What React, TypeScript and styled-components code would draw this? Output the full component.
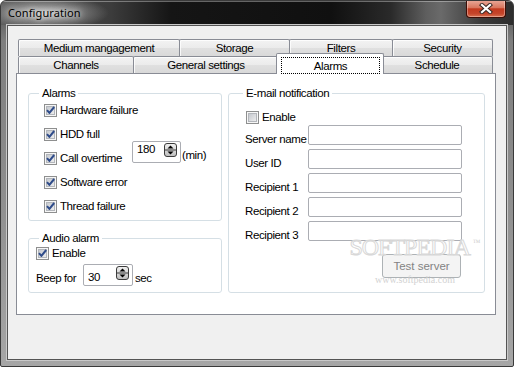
import React from "react";
import styled, { createGlobalStyle, css } from "styled-components";

const GlobalStyle = createGlobalStyle`
  html, body { margin: 0; padding: 0; background: #ffffff; }
  #root { width: 514px; height: 367px; }
  *, *::before, *::after { box-sizing: border-box; }
`;

const Window = styled.div`
  width: 514px;
  height: 367px;
  display: flex;
  flex-direction: column;
  border: 1px solid #3a3a3a;
  border-radius: 6px 6px 2px 2px;
  overflow: hidden;
  background: linear-gradient(to bottom, #4a4a4a 0px, #7e7e7e 40px, #8f8f8f 200px, #a6a6a6 100%);
  font-family: "Liberation Sans", Arial, sans-serif;
  font-size: 11.5px;
  letter-spacing: -0.4px;
  color: #000;
`;

const TitleBar = styled.div`
  flex: 0 0 24px;
  height: 24px;
  display: flex;
  align-items: flex-start;
  padding: 0 7px;
  background:
    radial-gradient(ellipse 64px 17px at 44px 12px, rgba(215, 215, 215, 0.85) 0%, rgba(165, 165, 165, 0.5) 55%, rgba(120, 120, 120, 0) 100%),
    linear-gradient(to right, #5a5a5a 0px, #3c3c3c 110px, #151515 170px, #101010 330px, #2a2a2a 390px, #5e5e5e 425px, #6a6a6a 440px, #3a3a3a 480px, #2d2d2d 100%);
  box-shadow: inset 0 1px 0 rgba(255, 255, 255, 0.35);
`;

const Title = styled.div`
  padding-top: 4px;
  font-family: "Noto Sans", "Liberation Sans", sans-serif;
  font-size: 11px;
  line-height: 16px;
  letter-spacing: 0.1px;
  color: #000;
  text-shadow: 0 0 6px rgba(255, 255, 255, 0.9), 0 0 10px rgba(255, 255, 255, 0.7);
`;

const CloseButton = styled.div`
  margin-left: auto;
  margin-top: -1px;
  width: 40px;
  height: 18px;
  display: flex;
  align-items: center;
  justify-content: center;
  border: 1px solid #3d0d05;
  border-top: none;
  border-radius: 0 0 4px 4px;
  background: linear-gradient(to bottom, #e9ab9c 0%, #d8775f 45%, #c23a1f 52%, #c4452b 80%, #d8704f 100%);
  box-shadow: inset 0 0 0 1px rgba(255, 255, 255, 0.35);
`;

const Frame = styled.div`
  flex: 1;
  display: flex;
  padding: 0 6px 6px 6px;
`;

const Client = styled.div`
  flex: 1;
  background: #f0f0f0;
  border: 1px solid #545454;
  box-shadow: 0 0 0 1px #c9c9c9;
  padding: 13px 0 0 8px;
`;

const TabControl = styled.div`
  width: 480px;
  display: flex;
  flex-direction: column;
`;

const TabRow = styled.div`
  display: flex;
  height: 17px;
  padding-left: 2px;
`;

const Tab = styled.div<{ $w: number; $active?: boolean }>`
  flex: 0 0 ${(p) => p.$w}px;
  height: 17px;
  margin-left: -1px;
  display: flex;
  align-items: center;
  justify-content: center;
  line-height: 14px;
  white-space: nowrap;
  border: 1px solid #898c95;
  border-bottom: none;
  border-radius: 2px 2px 0 0;
  background: linear-gradient(to bottom, #f3f3f3 0%, #ebebeb 50%, #e0e0e0 51%, #d9d9d9 100%);
  box-shadow: inset 1px 1px 0 rgba(255, 255, 255, 0.8);
  &:first-child {
    margin-left: 0;
  }
  ${(p) =>
    p.$active &&
    css`
      flex-basis: ${p.$w + 4}px;
      height: 21px;
      margin: -3px -2px 0 -3px;
      position: relative;
      z-index: 1;
      align-items: stretch;
      background: #ffffff;
      box-shadow: none;
    `}
`;

const FocusRing = styled.div`
  flex: 1;
  margin: 3px 3px 0 4px;
  border: 1px dotted #000;
  display: flex;
  align-items: center;
  justify-content: center;
`;

const Panel = styled.div`
  position: relative;
  width: 480px;
  height: 242px;
  border: 1px solid #898c95;
  background: #ffffff;
  padding: 19px 0 0 11px;
  display: grid;
  grid-template-columns: 194px 257px;
  column-gap: 6px;
  align-items: start;
`;

const Column = styled.div`
  display: flex;
  flex-direction: column;
  gap: 17px;
`;

const GroupBox = styled.div<{ $h: number; $pad: string }>`
  position: relative;
  height: ${(p) => p.$h}px;
  border: 1px solid #d5dfe5;
  border-radius: 3px;
  padding: ${(p) => p.$pad};
  display: flex;
  flex-direction: column;
`;

const Caption = styled.span<{ $left: number }>`
  position: absolute;
  top: -8px;
  left: ${(p) => p.$left}px;
  padding: 0 3px;
  background: #ffffff;
  line-height: 14px;
  white-space: nowrap;
`;

const Row = styled.div<{ $h: number }>`
  display: flex;
  align-items: center;
  height: ${(p) => p.$h}px;
`;

const CheckItem = styled.div<{ $w?: number }>`
  display: flex;
  align-items: center;
  flex: 0 0 ${(p) => (p.$w ? `${p.$w}px` : "auto")};
`;

const CheckSvg = styled.svg<{ $ml?: number }>`
  display: block;
  flex: 0 0 13px;
  margin: 0 3px 0 ${(p) => p.$ml ?? 0}px;
`;

const Text = styled.span<{ $w?: number; $dy?: number; $ml?: number }>`
  line-height: 14px;
  white-space: nowrap;
  ${(p) => p.$w && `flex: 0 0 ${p.$w}px;`}
  margin-top: ${(p) => p.$dy ?? 0}px;
  margin-left: ${(p) => p.$ml ?? 0}px;
`;

const Spinner = styled.div<{ $w: number; $dy: number }>`
  flex: 0 0 ${(p) => p.$w}px;
  height: 22px;
  margin-top: ${(p) => p.$dy}px;
  display: flex;
  align-items: flex-start;
  padding: 0 3px 0 4px;
  border: 1px solid #abadb3;
  border-radius: 2px;
  background: #ffffff;
`;

const SpinValue = styled.span<{ $top: number }>`
  padding-top: ${(p) => p.$top}px;
  line-height: 14px;
`;

const SpinSvg = styled.svg`
  display: block;
  margin: 1px 0 0 auto;
`;

const FormGrid = styled.div`
  display: grid;
  grid-template-columns: 63px 154px;
  grid-auto-rows: 24px;
`;

const FieldLabel = styled.span`
  padding-top: 7px;
  line-height: 14px;
  white-space: nowrap;
`;

const TextBox = styled.input`
  width: 154px;
  height: 20px;
  margin: 0;
  padding: 0 3px;
  border: 1px solid #abadb3;
  border-radius: 2px;
  background: #ffffff;
  outline: none;
  font: inherit;
`;

const ButtonRow = styled.div`
  width: 216px;
  margin-top: 9px;
  display: flex;
  justify-content: flex-end;
`;

const TestButton = styled.button`
  width: 79px;
  height: 24px;
  padding: 0;
  border: 1px solid #adb2b5;
  border-radius: 3px;
  background: #f4f4f4;
  color: #838383;
  font: inherit;
  line-height: 11px;
`;

const Watermark = styled.div`
  position: absolute;
  left: 336px;
  top: 157px;
  width: 124px;
  display: flex;
  flex-direction: column;
  align-items: center;
  pointer-events: none;
  z-index: 2;
`;

const WatermarkBrand = styled.div`
  font-family: "Liberation Serif", serif;
  font-size: 24px;
  line-height: 24px;
  letter-spacing: -1px;
  color: rgba(255, 255, 255, 0.4);
  -webkit-text-stroke: 1px #d8d8d8;
  white-space: nowrap;
  sup {
    font-size: 8px;
    letter-spacing: 0;
    -webkit-text-stroke: 0;
    color: #cfcfcf;
    vertical-align: 10px;
    margin-left: 3px;
  }
`;

const WatermarkUrl = styled.div`
  margin-top: 16px;
  font-family: "Liberation Serif", serif;
  font-size: 10px;
  line-height: 9px;
  letter-spacing: 0;
  color: #d2d2d2;
  white-space: nowrap;
`;

const Checkbox: React.FC<{ checked?: boolean; ml?: number }> = ({ checked, ml }) => (
  <CheckSvg $ml={ml} width="13" height="13" viewBox="0 0 13 13">
    <defs>
      <linearGradient id="cbg" x1="0" y1="0" x2="1" y2="1">
        <stop offset="0" stopColor="#c3c7cd" />
        <stop offset="1" stopColor="#efefef" />
      </linearGradient>
    </defs>
    <rect x="0.5" y="0.5" width="12" height="12" fill="#f6f6f6" stroke="#8e8f8f" />
    <rect x="2.5" y="2.5" width="8" height="8" fill="url(#cbg)" stroke="#b3b6bb" />
    {checked && (
      <path d="M3 6.2 L5.4 8.9 L10.2 3" fill="none" stroke="#2f4c8a" strokeWidth="2" strokeLinejoin="round" />
    )}
  </CheckSvg>
);

const SpinIcon: React.FC = () => (
  <SpinSvg width="13" height="14" viewBox="0 0 13 14">
    <defs>
      <linearGradient id="spg" x1="0" y1="0" x2="0" y2="1">
        <stop offset="0" stopColor="#f2f2f2" />
        <stop offset="1" stopColor="#bdbdbd" />
      </linearGradient>
    </defs>
    <rect x="0.5" y="0.5" width="12" height="13" rx="2.5" fill="url(#spg)" stroke="#3c3c3c" />
    <line x1="1" y1="7" x2="12" y2="7" stroke="#3c3c3c" />
    <path d="M3.5 5.5 L6.5 2.5 L9.5 5.5 Z" fill="#000" />
    <path d="M3.5 8.5 L6.5 11.5 L9.5 8.5 Z" fill="#000" />
  </SpinSvg>
);

const CloseIcon: React.FC = () => (
  <svg width="14" height="11" viewBox="0 0 14 11">
    <path d="M3 2 L11 9 M11 2 L3 9" stroke="#3b2a26" strokeWidth="4.2" strokeLinecap="square" fill="none" />
    <path d="M3 2 L11 9 M11 2 L3 9" stroke="#ffffff" strokeWidth="2.2" strokeLinecap="square" fill="none" />
  </svg>
);

const backTabs = [
  { label: "Medium mangagement", w: 162 },
  { label: "Storage", w: 111 },
  { label: "Filters", w: 104 },
  { label: "Security", w: 101 },
];

const frontTabs = [
  { label: "Channels", w: 116 },
  { label: "General settings", w: 146 },
  { label: "Alarms", w: 104, active: true },
  { label: "Schedule", w: 112 },
];

const alarmItems = ["Hardware failure", "HDD full", "Call overtime", "Software error", "Thread failure"];

const emailFields = ["Server name", "User ID", "Recipient 1", "Recipient 2", "Recipient 3"];

export default function App() {
  return (
    <>
      <GlobalStyle />
      <Window>
        <TitleBar>
          <Title>Configuration</Title>
          <CloseButton>
            <CloseIcon />
          </CloseButton>
        </TitleBar>
        <Frame>
          <Client>
            <TabControl>
              <TabRow>
                {backTabs.map((t) => (
                  <Tab key={t.label} $w={t.w}>
                    {t.label}
                  </Tab>
                ))}
              </TabRow>
              <TabRow>
                {frontTabs.map((t) => (
                  <Tab key={t.label} $w={t.w} $active={t.active}>
                    {t.active ? <FocusRing>{t.label}</FocusRing> : t.label}
                  </Tab>
                ))}
              </TabRow>
              <Panel>
                <Column>
                  <GroupBox $h={128} $pad="4px 0 0 15px">
                    <Caption $left={10}>Alarms</Caption>
                    {alarmItems.map((item) =>
                      item === "Call overtime" ? (
                        <Row key={item} $h={24}>
                          <CheckItem $w={88}>
                            <Checkbox checked />
                            <Text>{item}</Text>
                          </CheckItem>
                          <Spinner $w={49} $dy={-12}>
                            <SpinValue $top={0}>180</SpinValue>
                            <SpinIcon />
                          </Spinner>
                          <Text $dy={-6} $ml={1}>
                            (min)
                          </Text>
                        </Row>
                      ) : (
                        <Row key={item} $h={24}>
                          <CheckItem>
                            <Checkbox checked />
                            <Text>{item}</Text>
                          </CheckItem>
                        </Row>
                      )
                    )}
                  </GroupBox>
                  <GroupBox $h={55} $pad="2px 0 0 7px">
                    <Caption $left={10}>Audio alarm</Caption>
                    <Row $h={24}>
                      <CheckItem>
                        <Checkbox checked />
                        <Text>Enable</Text>
                      </CheckItem>
                    </Row>
                    <Row $h={26}>
                      <Text $w={47}>Beep for</Text>
                      <Spinner $w={50} $dy={-6}>
                        <SpinValue $top={5}>30</SpinValue>
                        <SpinIcon />
                      </Spinner>
                      <Text $ml={2}>sec</Text>
                    </Row>
                  </GroupBox>
                </Column>
                <GroupBox $h={200} $pad="15px 0 0 16px">
                  <Caption $left={14}>E-mail notification</Caption>
                  <Row $h={16}>
                    <CheckItem>
                      <Checkbox ml={1} />
                      <Text>Enable</Text>
                    </CheckItem>
                  </Row>
                  <FormGrid>
                    {emailFields.map((f) => (
                      <React.Fragment key={f}>
                        <FieldLabel>{f}</FieldLabel>
                        <TextBox readOnly defaultValue="" />
                      </React.Fragment>
                    ))}
                  </FormGrid>
                  <ButtonRow>
                    <TestButton disabled>Test server</TestButton>
                  </ButtonRow>
                </GroupBox>
                <Watermark>
                  <WatermarkBrand>
                    SOFTPEDIA<sup>™</sup>
                  </WatermarkBrand>
                  <WatermarkUrl>www.softpedia.com</WatermarkUrl>
                </Watermark>
              </Panel>
            </TabControl>
          </Client>
        </Frame>
      </Window>
    </>
  );
}
